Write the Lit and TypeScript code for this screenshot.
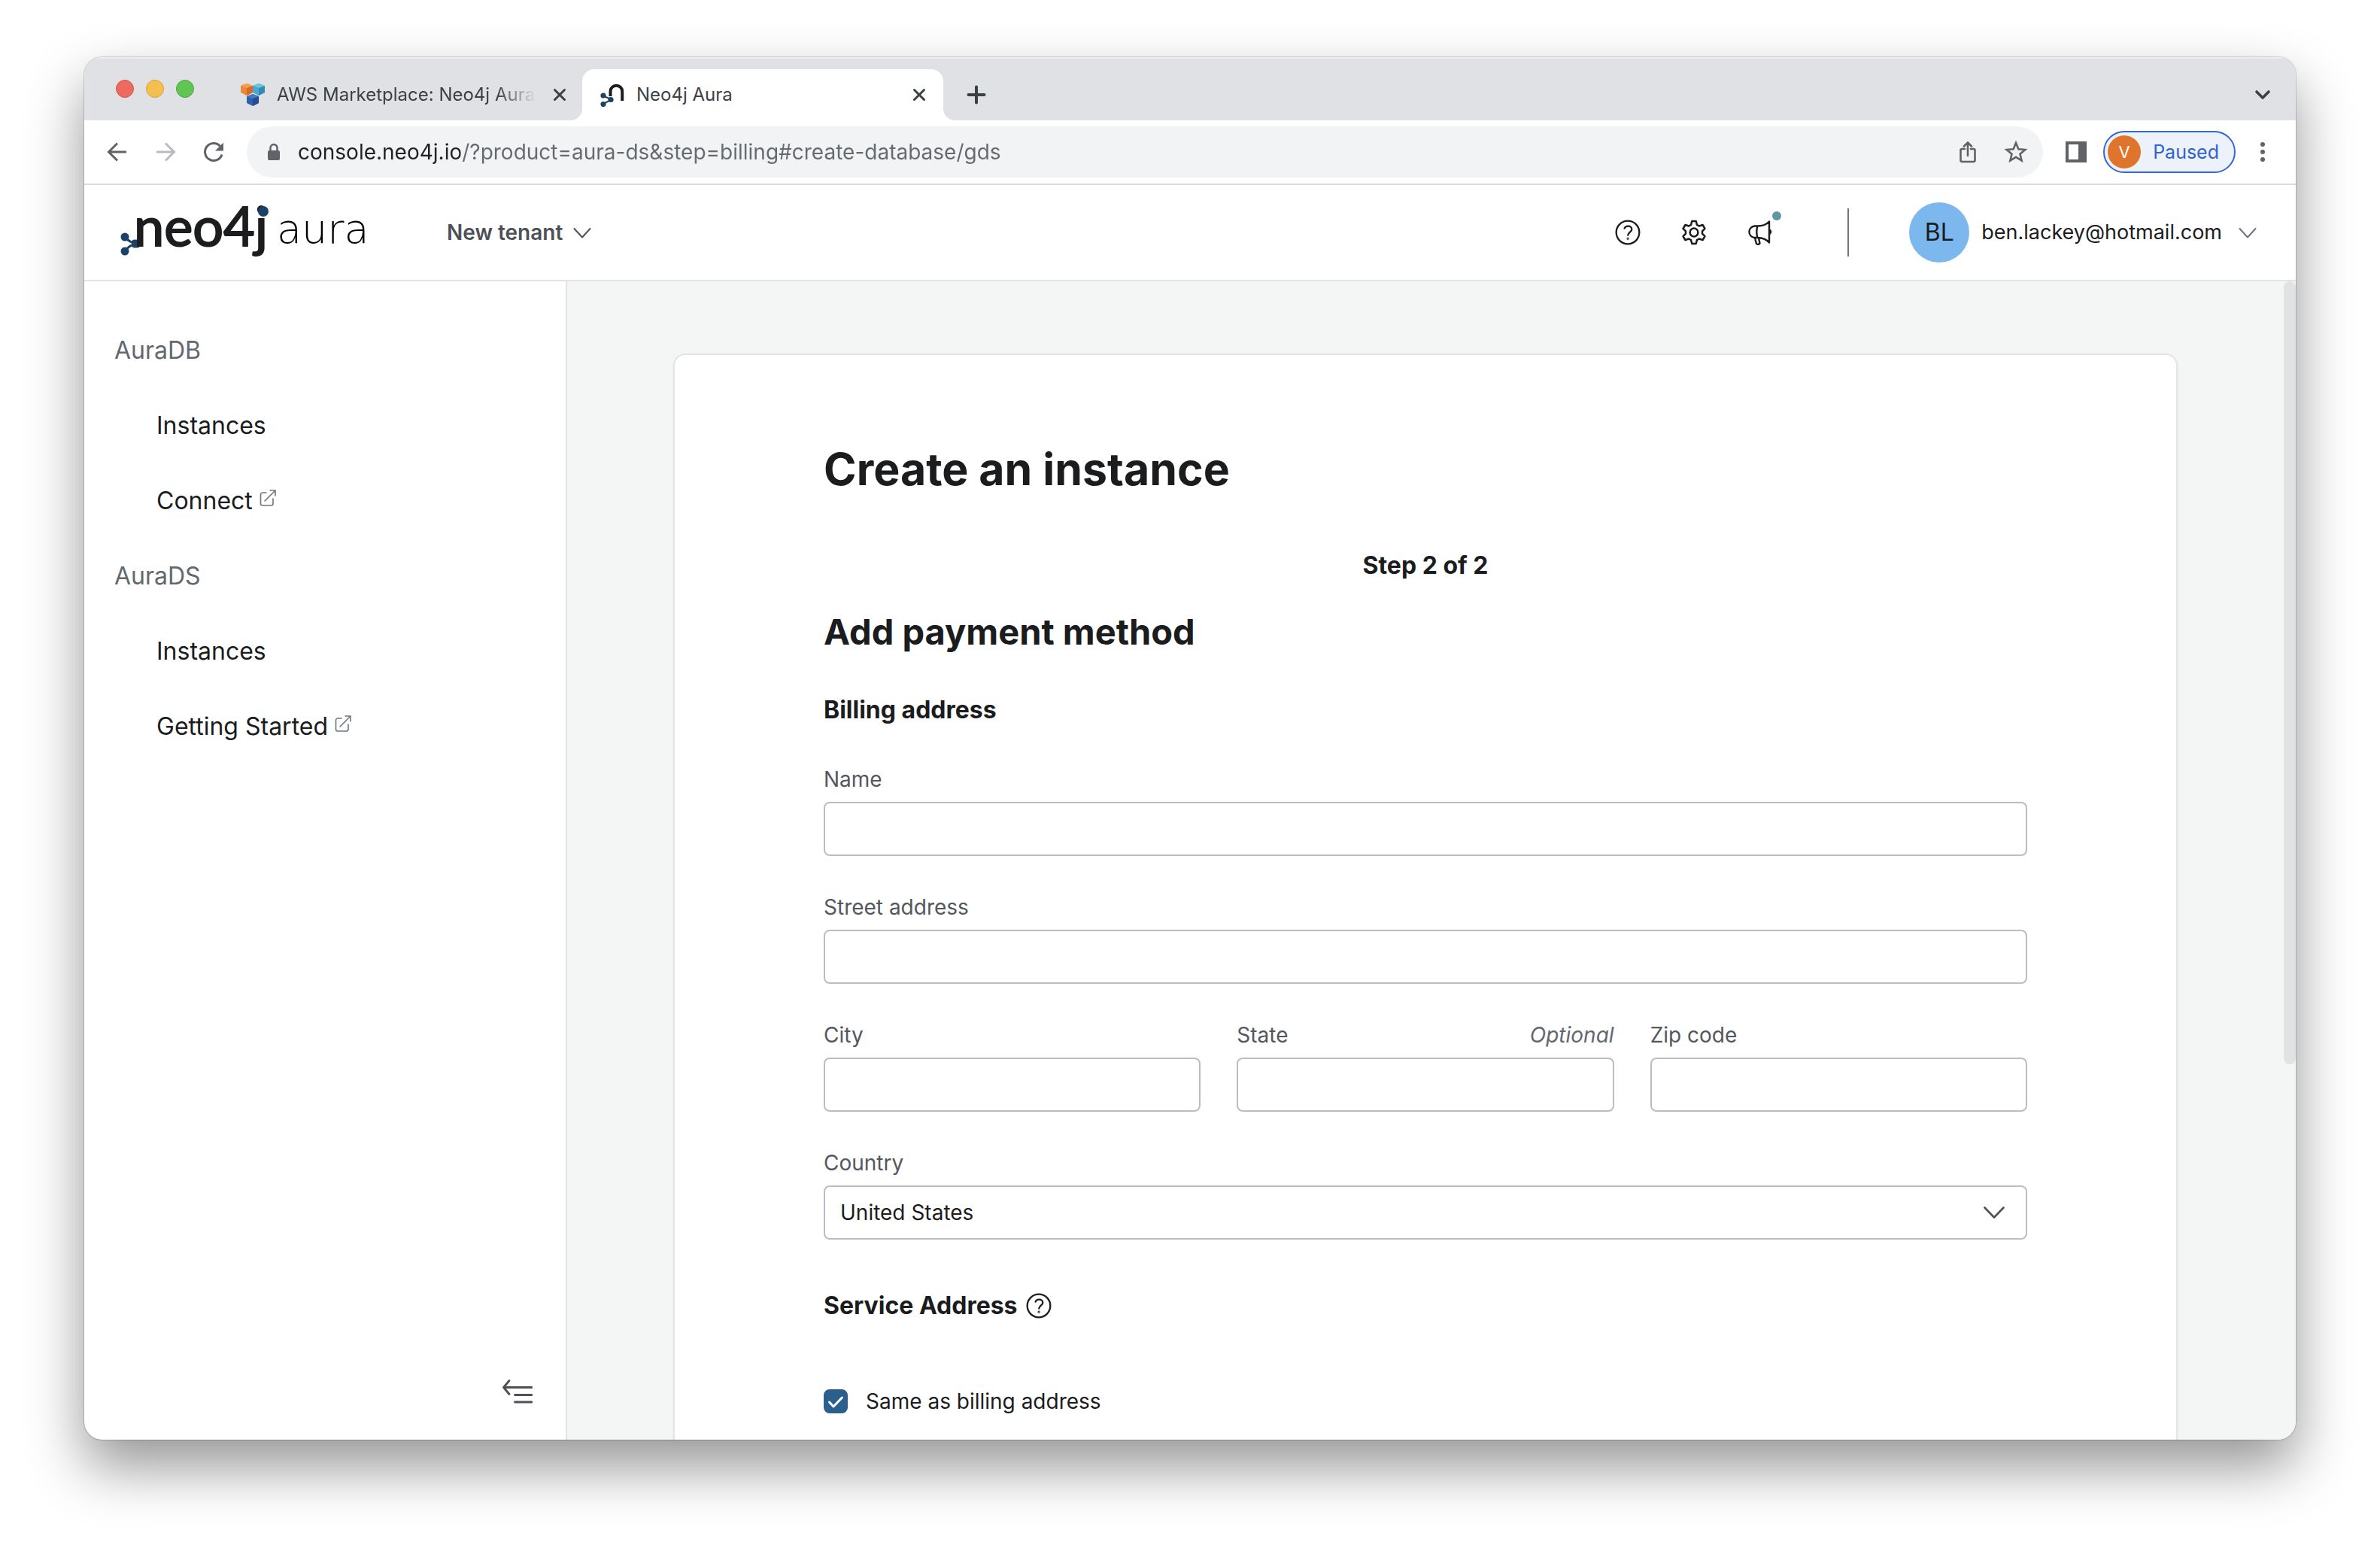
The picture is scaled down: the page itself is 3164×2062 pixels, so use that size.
import { LitElement, html, css, svg, nothing } from "lit";
import { customElement, state, query } from "lit/decorators.js";
import { styleMap } from "lit/directives/style-map.js";

interface NavItem {
  label: string;
  external?: boolean;
}

interface NavGroup {
  title: string;
  items: NavItem[];
}

const NAV: NavGroup[] = [
  { title: "AuraDB", items: [{ label: "Instances" }, { label: "Connect", external: true }] },
  { title: "AuraDS", items: [{ label: "Instances" }, { label: "Getting Started", external: true }] },
];

const stroke = (size: number, body: unknown, width = 2) => html`
  <svg width=${size} height=${size} viewBox="0 0 ${size} ${size}" fill="none" stroke="currentColor"
    stroke-width=${width} stroke-linecap="round" stroke-linejoin="round" aria-hidden="true">${body}</svg>`;

const icons = {
  close: () => stroke(24, svg`<path d="M5.5 5.5l13 13M18.5 5.5l-13 13" />`, 3),
  plus: () => stroke(32, svg`<path d="M16 5.500v21M5.500 16h21" />`, 4),
  tabsMenu: () => stroke(32, svg`<path d="M8 12l8 8 8-8" />`, 3.6),
  back: () => stroke(32, svg`<path d="M28 16H5M16 4.500L4.500 16 16 27.500" stroke-linecap="butt" stroke-linejoin="miter" />`, 3),
  forward: () => stroke(32, svg`<path d="M4 16h23M16 4.500L27.500 16 16 27.500" stroke-linecap="butt" stroke-linejoin="miter" />`, 3),
  reload: () => stroke(32, svg`<path d="M27 19.500A11.500 11.500 0 1 1 24.500 8.200" stroke-linecap="butt" /><path d="M29 3.500v11H18z" fill="currentColor" stroke="none" />`, 3),
  lock: () => stroke(32, svg`<rect x="8" y="14" width="16" height="13" rx="2" fill="currentColor" stroke="none" /><path d="M11.500 14v-3.500a4.500 4.500 0 0 1 9 0V14" />`, 2.5),
  share: () => stroke(32, svg`<path d="M12 12H8.500a2 2 0 0 0-2 2v13a2 2 0 0 0 2 2h15a2 2 0 0 0 2-2V14a2 2 0 0 0-2-2H20M16 21V4M11 8.500L16 3.500l5 5" />`, 2.6),
  star: () => stroke(32, svg`<path d="M16 4l3.400 8.300 8.900.700-6.800 5.800 2.100 8.700L16 22.800l-7.600 4.700 2.100-8.700-6.800-5.800 8.900-.700z" stroke-linejoin="miter" />`, 2.6),
  panel: () => stroke(32, svg`<path d="M2 2h28v28H2zM6 6v20h13V6z" fill="currentColor" fill-rule="evenodd" stroke="none" />`),
  more: () => stroke(32, svg`<g fill="currentColor" stroke="none"><circle cx="16" cy="6" r="3" /><circle cx="16" cy="16" r="3" /><circle cx="16" cy="26" r="3" /></g>`),
  chevron: () => stroke(24, svg`<path d="M1.500 7L12 18.500 22.500 7" />`, 2),
  chevronWide: () => stroke(28, svg`<path d="M1.500 7.500L14 20.500l12.500-13" />`, 2.6),
  help: () => stroke(36, svg`<circle cx="18" cy="18" r="15.300" /><path d="M13.600 12.600c1-2.300 3-3 4.700-3 2.900 0 5 1.800 5 4.300 0 3.400-5.100 4-5.100 7.800" /><circle cx="18.100" cy="26.200" r=".500" />`, 2.3),
  gear: () => stroke(36, svg`<circle cx="18" cy="18" r="5.400" /><path d="M15.300 3h5.400l1.200 4.800 2.900 1.700 4.800-1.500 2.900 4.900L29 16.400v3.200l3.500 3.500-2.900 4.900-4.800-1.500-2.900 1.700-1.200 4.800h-5.400l-1.200-4.800-2.900-1.700L6.400 28l-2.900-4.900L7 19.600v-3.200l-3.500-3.500L6.400 8l4.800 1.500 2.900-1.700z" />`, 2.5),
  megaphone: () => stroke(36, svg`<path d="M14.500 9.500c6.500 0 12-2 15.500-6v28c-3.500-4-9-6.500-15.500-6.500H10.500a8 7.800 0 0 1 0-15.500zM14.500 9.500c-1.600 5-1.600 10.500 0 15.500M11 25.500l2 7.500c1.500 1.500 3.500.800 4.500-.500l-1.500-7M30.500 14.500c2.200 1.600 2.200 4 0 5.500" />`, 2.4),
  external: () => stroke(24, svg`<path d="M10 5H5a2.500 2.500 0 0 0-2.500 2.500v12A2.500 2.500 0 0 0 5 22h11.500a2.500 2.500 0 0 0 2.500-2.500V13M8 16L21.500 2.500M15 2h7v7" />`, 1.6),
  collapse: () => stroke(40, svg`<path d="M39 14.500H1.500M9 5.500L1.500 14.500 9 23.500M16.500 24.500H39M16.500 34H39" />`, 2.8),
  check: () => stroke(32, svg`<path d="M7.500 17l5.500 6L24.500 11" />`, 3),
};

const nodes = svg`
  <path d="M8 42C12 47 17 50 24 51C17 52 12 55 8 61" fill="none" stroke="#1b4265" stroke-width="3" />
  <circle cx="8" cy="42" r="5.500" fill="#1b4265" />
  <circle cx="24" cy="51" r="5.500" fill="#1b4265" />
  <rect x="17" y="45.500" width="8" height="11" rx="4" fill="#1b4265" />
  <circle cx="8" cy="61" r="5.500" fill="#1b4265" />`;

const neoMark = html`
  <svg width="32" height="32" viewBox="0 0 32 32" aria-hidden="true">
    <path d="M13.500 18v-6.500a7.800 7.800 0 0 1 15.700 0V24" fill="none" stroke="#1c1d1f" stroke-width="4" />
    <path d="M4 17.500l11 4.800L4 28" fill="none" stroke="#1b4265" stroke-width="2" />
    <circle cx="4" cy="17" r="3.600" fill="#1b4265" />
    <circle cx="14" cy="22.500" r="3.600" fill="#1b4265" />
    <circle cx="4" cy="28.500" r="3.600" fill="#1b4265" />
  </svg>`;

const marketMark = html`
  <svg width="32" height="32" viewBox="0 0 32 32" aria-hidden="true">
    <path d="M8 1l8 3v9l-8 4-8-4V4z" fill="#e8893a" /><path d="M8 7l8-3v9l-8 4z" fill="#d9692b" /><path d="M8 1l8 3-8 3-8-3z" fill="#f2a04b" />
    <path d="M24 1l8 3v9l-8 4-8-4V4z" fill="#48a9cc" /><path d="M24 7l8-3v9l-8 4z" fill="#3787b5" /><path d="M24 1l8 3-8 3-8-3z" fill="#6bc3dc" />
    <path d="M16 15l8 3v9l-8 4-8-4v-9z" fill="#2f62ad" /><path d="M16 21l8-3v9l-8 4z" fill="#264a94" /><path d="M16 15l8 3-8 3-8-3z" fill="#3f7cc4" />
  </svg>`;

@customElement("app-root")
export class AppRoot extends LitElement {
  @state() private thumbSize = 0;
  @state() private thumbStart = 0;
  @query(".content") private content!: HTMLElement;

  private resize = () => this.syncScrollbar();

  connectedCallback() {
    super.connectedCallback();
    window.addEventListener("resize", this.resize);
  }

  disconnectedCallback() {
    window.removeEventListener("resize", this.resize);
    super.disconnectedCallback();
  }

  firstUpdated() {
    this.syncScrollbar();
  }

  private syncScrollbar() {
    const { clientHeight, scrollHeight, scrollTop } = this.content;
    this.thumbSize = (100 * clientHeight) / scrollHeight;
    this.thumbStart = (100 * scrollTop) / scrollHeight;
  }

  static styles = css`
    :host {
      display: block;
      height: 100vh;
      box-sizing: border-box;
      padding: 76px 112px 148px;
      background: #fff;
      color: #1b1c1e;
      font-family: Inter, "Liberation Sans", sans-serif;
      font-size: 28px;
      line-height: 40px;
    }
    *, *::before, *::after { box-sizing: border-box; }
    button, input, select { font: inherit; color: inherit; margin: 0; }
    button { border: 0; padding: 0; background: none; display: inline-flex; align-items: center; justify-content: center; flex: none; }
    a { color: inherit; text-decoration: none; }
    svg { display: block; flex: none; }
    h1, h2, h3, p, ul { margin: 0; padding: 0; }
    ul { list-style: none; }

    .window {
      display: flex;
      flex-direction: column;
      height: 100%;
      border-radius: 24px;
      overflow: hidden;
      background: #fff;
      box-shadow: 0 0 2px rgba(0, 0, 0, 0.5), 0 36px 76px rgba(0, 0, 0, 0.42);
    }

    .tabstrip { display: flex; align-items: flex-end; height: 84px; flex: none; padding: 0 28px 0 42px; background: #dfe1e5; box-shadow: inset 0 2px 1px #eceef0; }
    .lights { display: flex; gap: 16px; align-self: center; margin-right: 36px; }
    .light { width: 24px; height: 24px; border-radius: 50%; border: 1px solid; }
    .light.red { background: #ed6a5e; border-color: #d35549; }
    .light.yellow { background: #f5bf4f; border-color: #d8a13c; }
    .light.green { background: #61c554; border-color: #4fa73f; }
    .tab { position: relative; display: flex; align-items: center; gap: 16px; width: 480px; height: 68px; padding: 0 18px 0 26px; color: #3c4043; font-size: 24px; border-radius: 16px 16px 0 0; }
    .tab.active { padding: 0 20px 0 24px; background: #fff; }
    .tab.active::before, .tab.active::after { content: ""; position: absolute; bottom: 0; width: 16px; height: 16px; }
    .tab.active::before { right: 100%; background: radial-gradient(circle at 0 0, transparent 16px, #fff 16px); }
    .tab.active::after { left: 100%; background: radial-gradient(circle at 100% 0, transparent 16px, #fff 16px); }
    .tab-title { flex: 1; min-width: 0; white-space: nowrap; }
    .tab-title.fade { mask-image: linear-gradient(90deg, #000 84%, transparent 99%); }
    .new-tab { height: 68px; margin-left: 28px; color: #3c4043; }
    .tabs-menu { height: 68px; margin-left: auto; color: #3c4043; }

    .toolbar { display: flex; align-items: center; height: 86px; flex: none; padding: 0 28px; border-bottom: 2px solid #dadbdd; color: #5f6368; }
    .history { display: flex; gap: 32px; margin-right: 28px; }
    .history .off { color: #b9bbbe; }
    .omnibox { display: flex; align-items: center; flex: 1; height: 68px; padding: 0 20px; gap: 16px; border-radius: 34px; background: #f1f3f4; }
    .url { flex: 1; min-width: 0; border: 0; padding: 0; outline: 0; -webkit-text-fill-color: transparent; background: linear-gradient(90deg, #202124 0 216px, #66696d 216px) text; }
    .omni-actions { display: flex; gap: 32px; }
    .side-panel { margin: 0 20px 0 28px; }
    .profile { height: 56px; gap: 16px; padding: 0 20px 0 4px; border: 2px solid #3367d1; border-radius: 28px; background: #edf2fa; color: #2f63ce; font-size: 25px; }
    .profile-letter { display: grid; place-items: center; width: 44px; height: 44px; border-radius: 50%; background: #df752c; color: #fff; font-size: 22px; }
    .more { margin-left: 20px; }

    .appbar { display: flex; align-items: center; height: 128px; flex: none; padding: 0 52px 0 46px; border-bottom: 2px solid #e1e3e4; }
    .logo-word { font-family: Lato, "Liberation Sans", sans-serif; font-size: 72px; stroke: #1c1d1f; stroke-width: 2px; }
    .logo-sub { font-family: "DejaVu Sans", "Liberation Sans", sans-serif; font-size: 54px; font-weight: 200; }
    .tenant { margin-left: 92px; gap: 14px; font-weight: 600; color: #4d5157; }
    .tools { display: flex; gap: 48px; margin-left: auto; }
    .tool { position: relative; width: 40px; height: 40px; }
    .badge { position: absolute; top: -8px; right: -8px; width: 12px; height: 12px; border-radius: 50%; background: #5f96a5; }
    .divider { width: 2px; height: 64px; margin: 0 80px 0 96px; background: #70757c; }
    .account { gap: 16px; font-size: 27px; }
    .account svg { margin-left: 6px; color: #6f757e; }
    .avatar { display: grid; place-items: center; width: 80px; height: 80px; border-radius: 50%; background: #7cb8ee; font-size: 32px; }

    .body { display: flex; flex: 1; min-height: 0; }
    .sidebar { display: flex; flex-direction: column; width: 642px; flex: none; padding: 42px 44px 44px 40px; border-right: 2px solid #e1e3e4; font-size: 32px; }
    .nav-title, .nav-item { display: flex; align-items: center; height: 100px; }
    .nav-title { margin: 0; font: inherit; color: #63676f; }
    .nav-item { padding-left: 56px; gap: 8px; }
    .nav-item svg { color: #6f757e; margin-bottom: 8px; }
    .collapse { margin: auto 0 0 auto; color: #4d5157; }

    .main { display: flex; flex: 1; min-width: 0; background: #f4f6f6; }
    .content { flex: 1; min-width: 0; overflow-y: auto; scrollbar-width: none; padding: 96px 70px; }
    .scrollbar { width: 16px; flex: none; }
    .thumb { border-radius: 8px; background: #e0e2e4; }
    .card { max-width: 2000px; margin: 0 auto; padding: 112px 198px 672px; border: 2px solid #e2e5e6; border-radius: 16px; background: #fff; box-shadow: 0 2px 4px rgba(0, 0, 0, 0.06); }

    h1 { font-size: 59px; line-height: 80px; font-weight: 700; }
    .step { margin-top: 68px; text-align: center; font-size: 32px; font-weight: 700; }
    .card h2 { margin-top: 40px; font-size: 47px; line-height: 56px; font-weight: 700; }
    h3 { display: flex; align-items: center; gap: 10px; font-size: 32px; font-weight: 700; }
    h2 + h3 { margin-top: 56px; }
    .fields { display: grid; grid-template-columns: repeat(3, minmax(0, 1fr)); gap: 48px; margin: 52px 0 68px; }
    .field { display: grid; grid-template-columns: 1fr auto; row-gap: 10px; color: #53575e; }
    .field.wide { grid-column: 1 / -1; }
    .optional { font-style: italic; color: #63676f; }
    .box { grid-column: 1 / -1; grid-row: 2; width: 100%; height: 72px; padding: 0 20px; border: 2px solid #bbbdc4; border-radius: 8px; background: #fff; color: #1b1c1e; appearance: none; }
    .field > svg { grid-column: 2; grid-row: 2; place-self: center end; margin-right: 30px; color: #4d5157; pointer-events: none; }
    .consent { display: flex; align-items: center; gap: 24px; margin-top: 87px; }
    .tick { display: grid; }
    .tick > * { grid-area: 1 / 1; }
    .tick svg { color: transparent; pointer-events: none; }
    .tick input { width: 32px; height: 32px; border: 2px solid #bbbdc4; border-radius: 8px; appearance: none; }
    .tick input:checked { border-color: #2b5f8d; background: #2b5f8d; }
    .tick input:checked + svg { color: #fff; }
  `;

  private renderField(id: string, label: string, wide = false, optional = false) {
    return html`
      <div class="field ${wide ? "wide" : ""}">
        <label for=${id}>${label}</label>
        ${optional ? html`<span class="optional">Optional</span>` : nothing}
        <input class="box" id=${id} type="text" />
      </div>`;
  }

  private renderBrowser() {
    return html`
      <div class="tabstrip">
        <div class="lights"><i class="light red"></i><i class="light yellow"></i><i class="light green"></i></div>
        <div class="tab">
          ${marketMark}<span class="tab-title fade">AWS Marketplace: Neo4j Aura</span>
          <button aria-label="Close tab">${icons.close()}</button>
        </div>
        <div class="tab active">
          ${neoMark}<span class="tab-title">Neo4j Aura</span>
          <button aria-label="Close tab">${icons.close()}</button>
        </div>
        <button class="new-tab" aria-label="New tab">${icons.plus()}</button>
        <button class="tabs-menu" aria-label="Search tabs">${icons.tabsMenu()}</button>
      </div>
      <div class="toolbar">
        <div class="history">
          <button aria-label="Back">${icons.back()}</button>
          <button class="off" aria-label="Forward">${icons.forward()}</button>
          <button aria-label="Reload">${icons.reload()}</button>
        </div>
        <div class="omnibox">
          ${icons.lock()}
          <input class="url" type="text" aria-label="Address"
            .value=${"console.neo4j.io/?product=aura-ds&step=billing#create-database/gds"} />
          <div class="omni-actions">
            <button aria-label="Share">${icons.share()}</button>
            <button aria-label="Bookmark">${icons.star()}</button>
          </div>
        </div>
        <button class="side-panel" aria-label="Side panel">${icons.panel()}</button>
        <button class="profile"><span class="profile-letter">V</span>Paused</button>
        <button class="more" aria-label="Menu">${icons.more()}</button>
      </div>`;
  }

  private renderAppBar() {
    return html`
      <header class="appbar">
        <a href="#" aria-label="Home">
          <svg width="344" height="112" viewBox="0 -20 344 112">
            ${nodes}
            <text class="logo-word" x="20" y="54" fill="#1c1d1f">neo4j</text>
            <circle cx="192" cy="8" r="7" fill="#1b4265" />
            <text class="logo-sub" x="210" y="50" fill="#000">aura</text>
          </svg>
        </a>
        <button class="tenant">New tenant ${icons.chevron()}</button>
        <div class="tools">
          <button class="tool" aria-label="Help">${icons.help()}</button>
          <button class="tool" aria-label="Settings">${icons.gear()}</button>
          <button class="tool" aria-label="News">${icons.megaphone()}<span class="badge"></span></button>
        </div>
        <div class="divider"></div>
        <button class="account"><span class="avatar">BL</span>ben.lackey@hotmail.com ${icons.chevron()}</button>
      </header>`;
  }

  render() {
    return html`
      <div class="window">
        ${this.renderBrowser()}
        ${this.renderAppBar()}
        <div class="body">
          <nav class="sidebar">
            ${NAV.map((group) => html`
              <h2 class="nav-title">${group.title}</h2>
              <ul>
                ${group.items.map((item) => html`
                  <li><a class="nav-item" href="#">${item.label}${item.external ? icons.external() : nothing}</a></li>`)}
              </ul>`)}
            <button class="collapse" aria-label="Collapse sidebar">${icons.collapse()}</button>
          </nav>
          <main class="main">
            <div class="content" @scroll=${this.syncScrollbar}>
              <form class="card" @submit=${(e: Event) => e.preventDefault()}>
                <h1>Create an instance</h1>
                <p class="step">Step 2 of 2</p>
                <h2>Add payment method</h2>
                <h3>Billing address</h3>
                <div class="fields">
                  ${this.renderField("name", "Name", true)}
                  ${this.renderField("street", "Street address", true)}
                  ${this.renderField("city", "City")}
                  ${this.renderField("state", "State", false, true)}
                  ${this.renderField("zip", "Zip code")}
                  <div class="field wide">
                    <label for="country">Country</label>
                    <select class="box" id="country"><option>United States</option></select>
                    ${icons.chevronWide()}
                  </div>
                </div>
                <h3>Service Address ${icons.help()}</h3>
                <div class="consent">
                  <span class="tick"><input id="same" type="checkbox" checked />${icons.check()}</span>
                  <label for="same">Same as billing address</label>
                </div>
              </form>
            </div>
            <div class="scrollbar">
              <div class="thumb" style=${styleMap({ height: `${this.thumbSize}%`, marginTop: `${this.thumbStart}%` })}></div>
            </div>
          </main>
        </div>
      </div>`;
  }
}
